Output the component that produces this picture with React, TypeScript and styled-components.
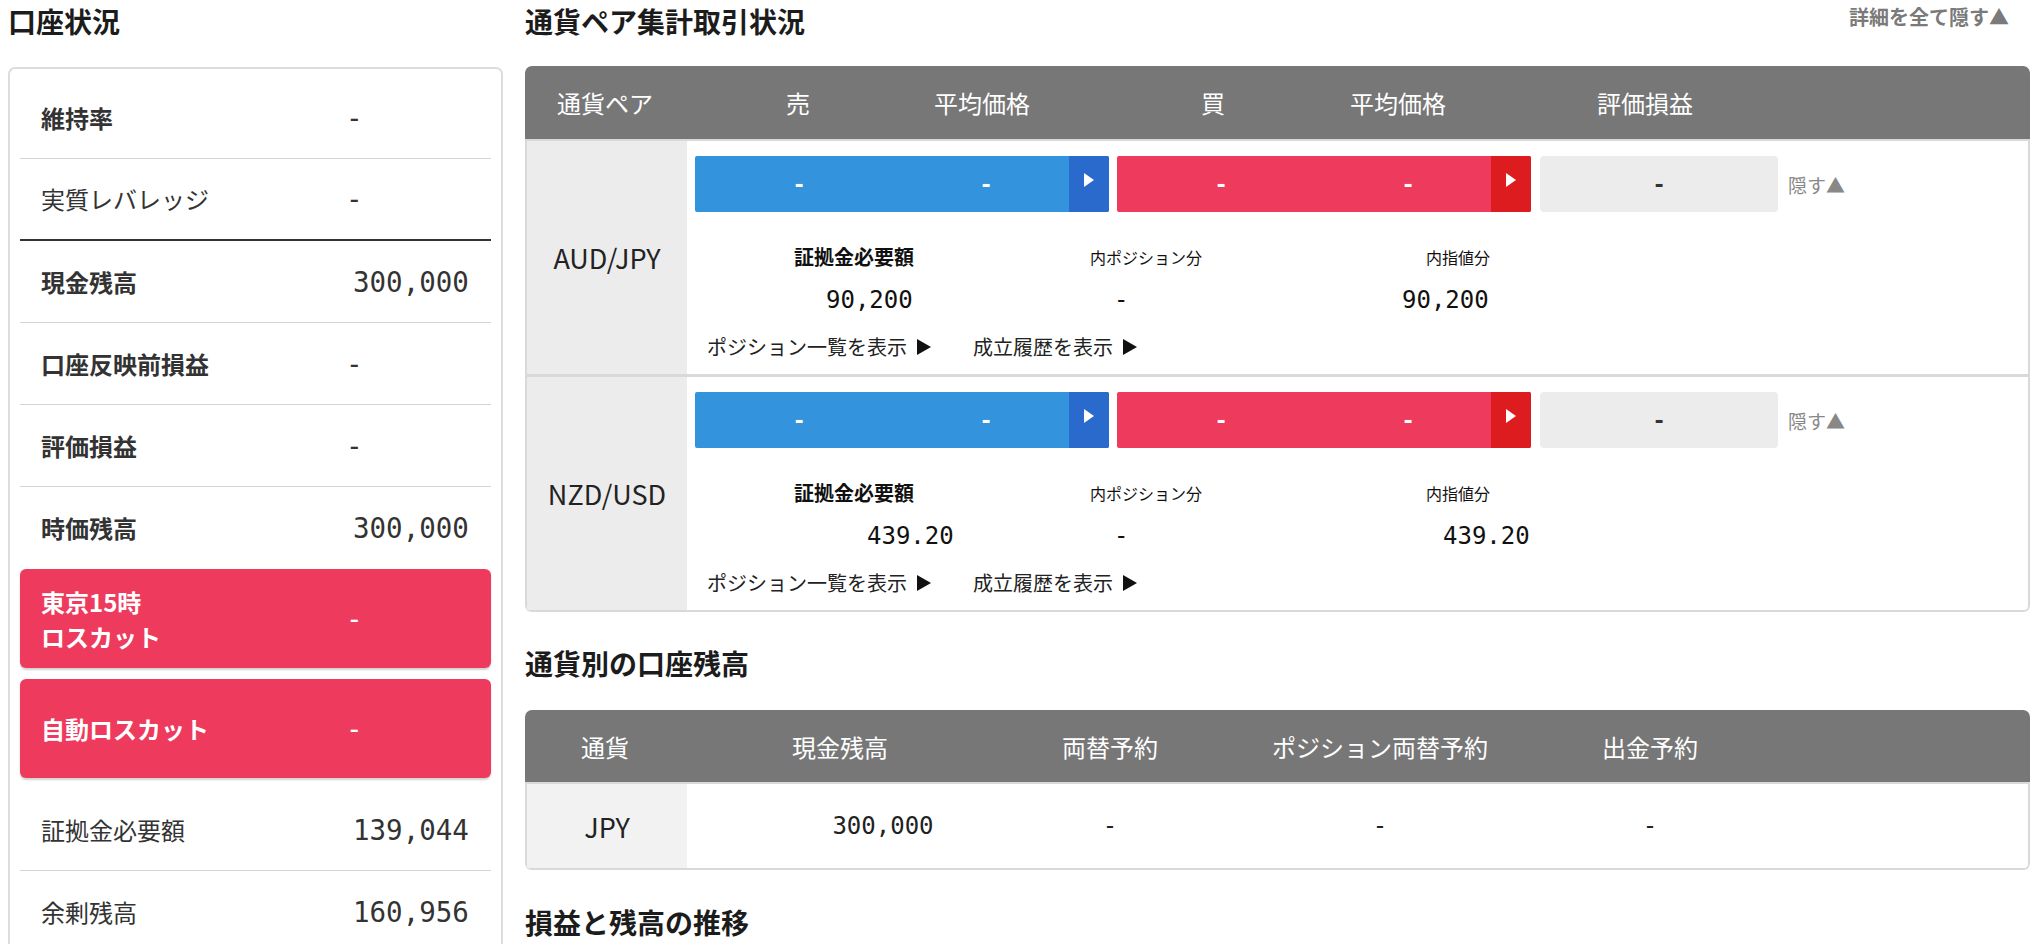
import styled, { createGlobalStyle } from "styled-components";

type Divider = "light" | "dark" | "none";

type StatusItem = {
  label: string;
  value: string;
  bold: boolean;
  divider: Divider;
};

type PairItem = {
  name: string;
  margin: string;
  marginIndent: number;
  position: string;
  order: string;
  orderIndent: number;
};

const topRows: StatusItem[] = [
  { label: "維持率", value: "-", bold: true, divider: "light" },
  { label: "実質レバレッジ", value: "-", bold: false, divider: "dark" },
  { label: "現金残高", value: "300,000", bold: true, divider: "light" },
  { label: "口座反映前損益", value: "-", bold: true, divider: "light" },
  { label: "評価損益", value: "-", bold: true, divider: "light" },
  { label: "時価残高", value: "300,000", bold: true, divider: "none" },
];

const bottomRows: StatusItem[] = [
  { label: "証拠金必要額", value: "139,044", bold: false, divider: "light" },
  { label: "余剰残高", value: "160,956", bold: false, divider: "none" },
];

const alerts = [
  { lines: ["東京15時", "ロスカット"], value: "-" },
  { lines: ["自動ロスカット"], value: "-" },
];

const pairs: PairItem[] = [
  {
    name: "AUD/JPY",
    margin: "90,200",
    marginIndent: 131,
    position: "-",
    order: "90,200",
    orderIndent: 131,
  },
  {
    name: "NZD/USD",
    margin: "439.20",
    marginIndent: 172,
    position: "-",
    order: "439.20",
    orderIndent: 172,
  },
];

const MONO = `"DejaVu Sans Mono", "Liberation Mono", monospace`;

const GlobalStyle = createGlobalStyle`
  html, body {
    margin: 0;
    padding: 0;
    background: #fff;
    overflow: hidden;
  }
  body {
    font-family: "Noto Sans CJK JP", "Noto Sans", sans-serif;
    color: #333;
  }
`;

const Page = styled.div`
  display: flex;
  align-items: flex-start;
  gap: 22px;
  width: 2040px;
  box-sizing: border-box;
  padding: 0 10px 0 8px;
`;

const LeftColumn = styled.section`
  flex: none;
  width: 495px;
`;

const RightColumn = styled.section`
  flex: 1;
  min-width: 0;
`;

const SectionTitle = styled.h2<{ $gap?: number }>`
  margin: ${(p) => p.$gap ?? 0}px 0 0;
  font-size: 28px;
  line-height: 42px;
  font-weight: 700;
  color: #1c1c1c;
`;

const TitleBar = styled.div`
  display: flex;
  justify-content: space-between;
  align-items: flex-start;
`;

const HideAll = styled.span`
  padding-right: 21px;
  font-size: 20px;
  line-height: 33px;
  font-weight: 700;
  color: #7a7a7a;
`;

/* ---------- account status card ---------- */

const AccountCard = styled.div`
  margin-top: 25px;
  border: 2px solid #dcdcdc;
  border-radius: 7px;
  padding: 8px 10px 24px;
`;

const StatusRow = styled.div<{ $divider: Divider }>`
  display: grid;
  grid-template-columns: 312px 1fr;
  align-items: center;
  box-sizing: border-box;
  height: 82px;
  padding-left: 21px;
  border-bottom: ${(p) =>
    p.$divider === "dark"
      ? "2px solid #333"
      : p.$divider === "light"
        ? "1px solid #d4d4d4"
        : "none"};
`;

const StatusLabel = styled.span<{ $bold: boolean }>`
  font-size: 24px;
  line-height: 30px;
  font-weight: ${(p) => (p.$bold ? 700 : 400)};
  color: #333;
`;

const StatusValue = styled.span<{ $empty?: boolean }>`
  margin-left: ${(p) => (p.$empty ? -7 : 0)}px;
  font-family: ${MONO};
  font-size: 27.5px;
  color: #333;
`;

const AlertRow = styled.div`
  display: grid;
  grid-template-columns: 312px 1fr;
  align-items: center;
  height: 99px;
  margin-bottom: 11px;
  padding-left: 21px;
  border-radius: 6px;
  background: #ee3a5d;
  box-shadow: 0 2px 2px rgba(0, 0, 0, 0.18);
  color: #fff;

  &:last-of-type {
    margin-bottom: 9px;
  }
`;

const AlertLabel = styled.div`
  display: flex;
  flex-direction: column;
  font-size: 24px;
  line-height: 35px;
  font-weight: 700;
`;

const AlertValue = styled(StatusValue)`
  color: #fff;
`;

/* ---------- shared table parts ---------- */

const Table = styled.div<{ $gap: number }>`
  margin-top: ${(p) => p.$gap}px;
  border-radius: 7px 7px 6px 6px;
  overflow: hidden;
`;

const TableHead = styled.div<{ $height: number }>`
  display: flex;
  align-items: center;
  height: ${(p) => p.$height}px;
  background: #777;
  border-bottom: 2px solid #d9d9d9;
  color: #fff;
  font-size: 24px;
`;

const HeadFirst = styled.span`
  flex: none;
  width: 160px;
  text-align: center;
`;

const TableBody = styled.div`
  border: 2px solid #d9d9d9;
  border-top: none;
  border-radius: 0 0 6px 6px;
`;

/* ---------- pair table ---------- */

const PairHeadCells = styled.div`
  display: grid;
  grid-template-columns: 148px 267px 149px 247px auto;
  padding-left: 101px;
`;

const PairRow = styled.div`
  display: flex;

  & + & {
    border-top: 3px solid #d9d9d9;
  }
`;

const NameCell = styled.div<{ $shade: string }>`
  flex: none;
  width: 160px;
  display: flex;
  align-items: center;
  justify-content: center;
  background: ${(p) => p.$shade};
  font-size: 27px;
  color: #222;
`;

const PairBody = styled.div`
  flex: 1;
  padding: 15px 0 14px 8px;
`;

const BarRow = styled.div`
  display: flex;
  align-items: center;
  gap: 8px;
`;

const PriceBar = styled.div<{ $side: "sell" | "buy" }>`
  display: flex;
  width: 414px;
  height: 56px;
  border-radius: 2px;
  overflow: hidden;
  background: ${(p) => (p.$side === "sell" ? "#3393dd" : "#ee3a5d")};
`;

const BarCells = styled.div`
  flex: 1;
  display: grid;
  grid-template-columns: 208px 1fr;
  align-items: center;
`;

const BarValue = styled.span<{ $dark?: boolean }>`
  text-align: center;
  font-family: ${MONO};
  font-size: 22px;
  font-weight: 700;
  color: ${(p) => (p.$dark ? "#333" : "#fff")};
`;

const BarArrow = styled.div<{ $side: "sell" | "buy" }>`
  flex: none;
  width: 40px;
  display: flex;
  align-items: center;
  justify-content: center;
  padding-bottom: 8px;
  box-sizing: border-box;
  background: ${(p) => (p.$side === "sell" ? "#2a6acc" : "#dd1c1f")};
`;

const ArrowHead = styled.span`
  width: 0;
  height: 0;
  border-left: 10px solid #fff;
  border-top: 7px solid transparent;
  border-bottom: 7px solid transparent;
`;

const PnlBox = styled.div`
  display: grid;
  place-items: center;
  width: 238px;
  height: 56px;
  margin-left: 1px;
  border-radius: 4px;
  background: #ececec;
`;

const HideLink = styled.span`
  margin-left: 2px;
  font-size: 19px;
  color: #888;
`;

const DetailGrid = styled.div`
  display: grid;
  grid-template-columns: repeat(3, 288px);
  margin-top: 33px;
`;

const DetailCol = styled.div`
  display: flex;
  flex-direction: column;
`;

const DetailLabel = styled.span<{ $bold?: boolean }>`
  padding-right: 69px;
  text-align: right;
  font-size: ${(p) => (p.$bold ? 20 : 16)}px;
  line-height: 24px;
  font-weight: ${(p) => (p.$bold ? 700 : 400)};
  color: #111;
`;

const DetailValue = styled.span<{ $indent: number }>`
  margin-top: 16px;
  padding-left: ${(p) => p.$indent}px;
  font-family: ${MONO};
  font-size: 24px;
  line-height: 30px;
  color: #111;
`;

const LinkRow = styled.div`
  display: flex;
  gap: 42px;
  margin-top: 19px;
  padding-left: 12px;
`;

const DetailLink = styled.span`
  display: inline-flex;
  align-items: center;
  gap: 10px;
  font-size: 20px;
  line-height: 26px;
  color: #222;
`;

const LinkArrow = styled.span`
  width: 0;
  height: 0;
  border-left: 14px solid #111;
  border-top: 8px solid transparent;
  border-bottom: 8px solid transparent;
`;

/* ---------- balance table ---------- */

const BalanceCells = styled.div`
  flex: 1;
  display: grid;
  grid-template-columns: repeat(4, 270px);
  align-items: center;
  padding-left: 20px;
`;

const BalanceHead = styled.span`
  text-align: center;
`;

const BalanceRow = styled.div`
  display: flex;
  height: 84px;
`;

const BalanceCellsBody = styled(BalanceCells)`
  padding-left: 18px;
`;

const BalanceValue = styled.span<{ $indent?: number }>`
  text-align: center;
  padding-left: ${(p) => p.$indent ?? 0}px;
  font-family: ${MONO};
  font-size: 24px;
  color: #222;
`;

function AccountStatus() {
  const row = (r: StatusItem) => (
    <StatusRow key={r.label} $divider={r.divider}>
      <StatusLabel $bold={r.bold}>{r.label}</StatusLabel>
      <StatusValue $empty={r.value === "-"}>{r.value}</StatusValue>
    </StatusRow>
  );
  return (
    <LeftColumn>
      <SectionTitle>口座状況</SectionTitle>
      <AccountCard>
        {topRows.map(row)}
        {alerts.map((a) => (
          <AlertRow key={a.lines.join("")}>
            <AlertLabel>
              {a.lines.map((l) => (
                <span key={l}>{l}</span>
              ))}
            </AlertLabel>
            <AlertValue $empty>{a.value}</AlertValue>
          </AlertRow>
        ))}
        {bottomRows.map(row)}
      </AccountCard>
    </LeftColumn>
  );
}

function PairSummary() {
  return (
    <>
      <TitleBar>
        <SectionTitle>通貨ペア集計取引状況</SectionTitle>
        <HideAll>詳細を全て隠す▲</HideAll>
      </TitleBar>
      <Table $gap={24}>
        <TableHead $height={73}>
          <HeadFirst>通貨ペア</HeadFirst>
          <PairHeadCells>
            <span>売</span>
            <span>平均価格</span>
            <span>買</span>
            <span>平均価格</span>
            <span>評価損益</span>
          </PairHeadCells>
        </TableHead>
        <TableBody>
          {pairs.map((p) => (
            <PairRow key={p.name}>
              <NameCell $shade="#ececec">{p.name}</NameCell>
              <PairBody>
                <BarRow>
                  <PriceBar $side="sell">
                    <BarCells>
                      <BarValue>-</BarValue>
                      <BarValue>-</BarValue>
                    </BarCells>
                    <BarArrow $side="sell">
                      <ArrowHead />
                    </BarArrow>
                  </PriceBar>
                  <PriceBar $side="buy">
                    <BarCells>
                      <BarValue>-</BarValue>
                      <BarValue>-</BarValue>
                    </BarCells>
                    <BarArrow $side="buy">
                      <ArrowHead />
                    </BarArrow>
                  </PriceBar>
                  <PnlBox>
                    <BarValue $dark>-</BarValue>
                  </PnlBox>
                  <HideLink>隠す▲</HideLink>
                </BarRow>
                <DetailGrid>
                  <DetailCol>
                    <DetailLabel $bold>証拠金必要額</DetailLabel>
                    <DetailValue $indent={p.marginIndent}>{p.margin}</DetailValue>
                  </DetailCol>
                  <DetailCol>
                    <DetailLabel>内ポジション分</DetailLabel>
                    <DetailValue $indent={131}>{p.position}</DetailValue>
                  </DetailCol>
                  <DetailCol>
                    <DetailLabel>内指値分</DetailLabel>
                    <DetailValue $indent={p.orderIndent}>{p.order}</DetailValue>
                  </DetailCol>
                </DetailGrid>
                <LinkRow>
                  <DetailLink>
                    ポジション一覧を表示
                    <LinkArrow />
                  </DetailLink>
                  <DetailLink>
                    成立履歴を表示
                    <LinkArrow />
                  </DetailLink>
                </LinkRow>
              </PairBody>
            </PairRow>
          ))}
        </TableBody>
      </Table>
    </>
  );
}

function CurrencyBalance() {
  return (
    <>
      <SectionTitle $gap={30}>通貨別の口座残高</SectionTitle>
      <Table $gap={26}>
        <TableHead $height={72}>
          <HeadFirst>通貨</HeadFirst>
          <BalanceCells>
            <BalanceHead>現金残高</BalanceHead>
            <BalanceHead>両替予約</BalanceHead>
            <BalanceHead>ポジション両替予約</BalanceHead>
            <BalanceHead>出金予約</BalanceHead>
          </BalanceCells>
        </TableHead>
        <TableBody>
          <BalanceRow>
            <NameCell $shade="#f2f2f2">JPY</NameCell>
            <BalanceCellsBody>
              <BalanceValue $indent={86}>300,000</BalanceValue>
              <BalanceValue>-</BalanceValue>
              <BalanceValue>-</BalanceValue>
              <BalanceValue>-</BalanceValue>
            </BalanceCellsBody>
          </BalanceRow>
        </TableBody>
      </Table>
      <SectionTitle $gap={31}>損益と残高の推移</SectionTitle>
    </>
  );
}

export default function App() {
  return (
    <>
      <GlobalStyle />
      <Page>
        <AccountStatus />
        <RightColumn>
          <PairSummary />
          <CurrencyBalance />
        </RightColumn>
      </Page>
    </>
  );
}
